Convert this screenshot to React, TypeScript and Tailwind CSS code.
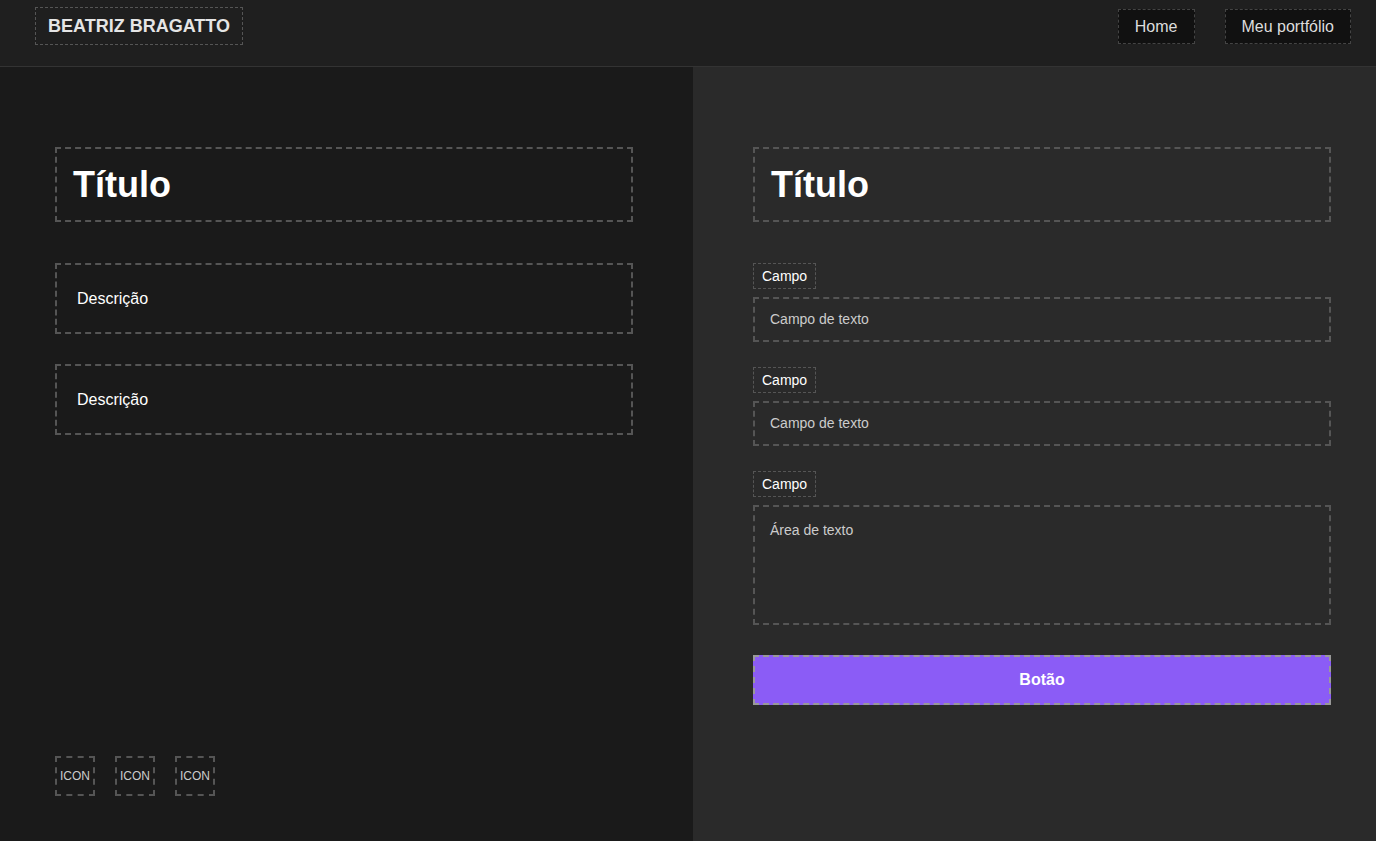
const font = { fontFamily: '"Liberation Sans", Arial, sans-serif' }

const Field = ({ label, placeholder, area }: { label: string; placeholder: string; area?: boolean }) => (
  <div className="flex flex-col items-start">
    <span className="border border-dashed border-[#555] px-2 h-[26px] flex items-center text-[14px] text-white">
      {label}
    </span>
    <div
      className={
        "mt-2 w-full border-2 border-dashed border-[#555] pl-[15px] pr-4 text-[14px] text-[#cccccc] " +
        (area ? "h-[120px] pt-[13px]" : "h-[45px] flex items-center")
      }
    >
      {placeholder}
    </div>
  </div>
)

export default function App() {
  return (
    <div className="w-[1376px] h-[841px] flex flex-col bg-[#1a1a1a]" style={font}>
      <header className="h-[67px] shrink-0 flex items-start justify-between pl-[35px] pr-[25px] pt-[7px] bg-[#1f1f1f] border-b border-[#333]">
        <div className="border border-dashed border-[#555] px-3 h-[38px] flex items-center text-[18px] font-bold text-[#e5e5e5]">
          BEATRIZ BRAGATTO
        </div>
        <nav className="flex gap-[30px] mt-[2px]">
          <span className="bg-[#111] border border-dashed border-[#444] h-[35px] px-4 flex items-center text-[16px] text-[#dddddd]">
            Home
          </span>
          <span className="bg-[#111] border border-dashed border-[#444] h-[35px] px-4 flex items-center text-[16px] text-[#dddddd]">
            Meu portfólio
          </span>
        </nav>
      </header>

      <main className="flex flex-1">
        <section className="w-[693px] bg-[#1a1a1a] pl-[55px] pr-[60px] pt-[80px] pb-[45px] flex flex-col justify-between">
          <div className="flex flex-col">
            <h1 className="h-[75px] border-2 border-dashed border-[#555] flex items-center px-4 text-[36px] font-bold text-white">
              Título
            </h1>
            <p className="mt-[41px] h-[71px] border-2 border-dashed border-[#555] flex items-center px-5 text-[16px] text-white">
              Descrição
            </p>
            <p className="mt-[30px] h-[71px] border-2 border-dashed border-[#555] flex items-center px-5 text-[16px] text-white">
              Descrição
            </p>
          </div>
          <div className="flex gap-5">
            {[0, 1, 2].map((i) => (
              <span
                key={i}
                className="w-10 h-10 border-2 border-dashed border-[#555] flex items-center justify-center text-[12px] text-[#cccccc]"
              >
                ICON
              </span>
            ))}
          </div>
        </section>

        <section className="flex-1 bg-[#2a2a2a] pl-[60px] pr-[45px] pt-[80px] flex flex-col">
          <h1 className="h-[75px] border-2 border-dashed border-[#555] flex items-center px-4 text-[36px] font-bold text-white">
            Título
          </h1>
          <div className="mt-[41px] flex flex-col gap-[25px]">
            <Field label="Campo" placeholder="Campo de texto" />
            <Field label="Campo" placeholder="Campo de texto" />
            <Field label="Campo" placeholder="Área de texto" area />
          </div>
          <button className="mt-[30px] h-[50px] w-full bg-[#8b5cf6] border-2 border-dashed border-[#999] text-[16px] font-bold text-white">
            Botão
          </button>
        </section>
      </main>
    </div>
  )
}
